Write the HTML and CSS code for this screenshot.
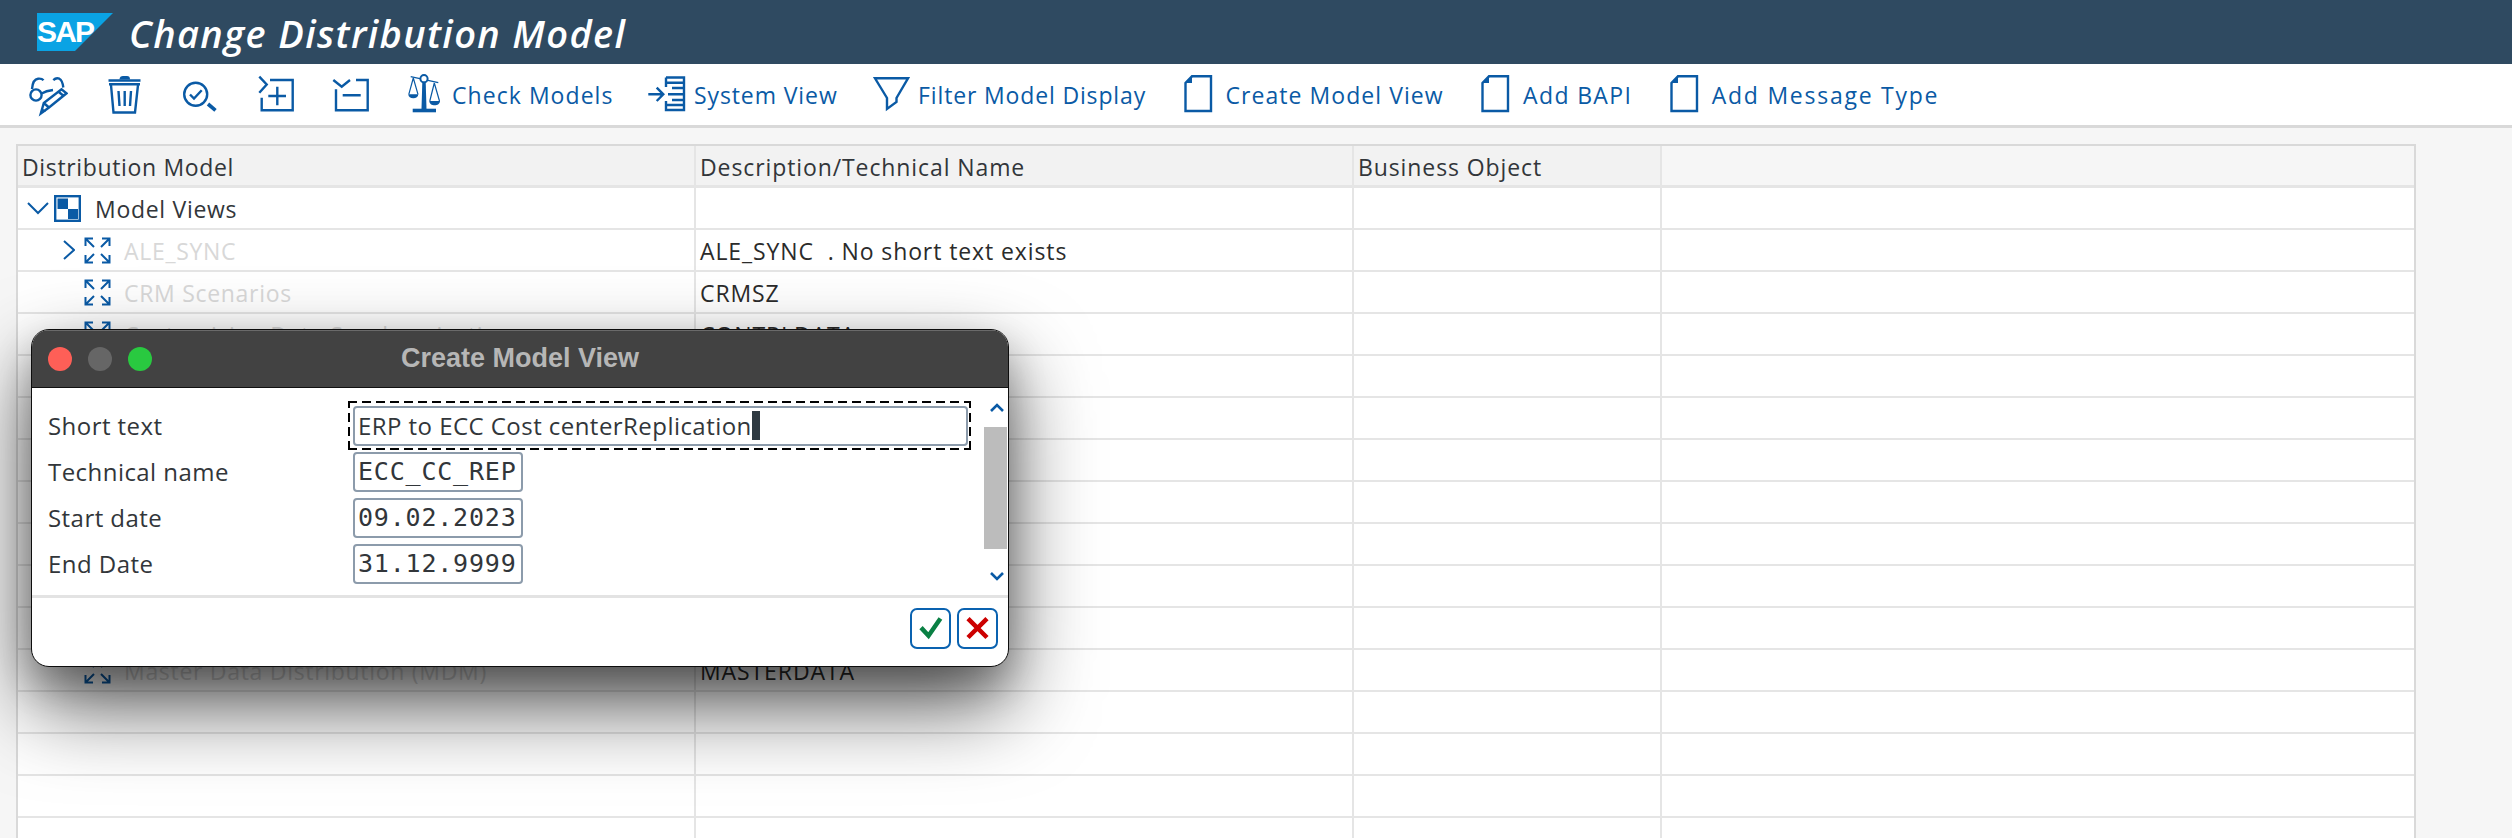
FILE: index.html
```html
<!DOCTYPE html>
<html lang="en">
<head>
<meta charset="utf-8">
<title>Change Distribution Model</title>
<link rel="stylesheet" href="styles.css">
</head>
<body>
<header class="titlebar">
  <div class="logo">
    <svg class="logo-shape" viewBox="0 0 76 38"><polygon points="0,0 76,0 38,38 0,38"/></svg>
    <span class="logo-text">SAP</span>
  </div>
  <h1 class="title">Change Distribution Model</h1>
</header>

<nav class="toolbar">
  <button class="tool">
    <svg class="ic w40" viewBox="0 0 40 44"><circle cx="8" cy="22" r="5.6"/><path d="M4 16C4.500 10 6.500 6 10 5.700C12.500 5.500 14.500 6 15.500 7.200M25.300 7.200C27 5.500 29.500 5 31.300 5.700C33.500 6.800 34.800 10 35.300 14.500M13.600 20.500C17 18.500 21 17.500 25 17"/><path d="M12.800 40.500L15.800 30L33.500 16.300L38.500 20.300L21 34.500ZM15.800 30L21 34.500M30.500 18.800L35.500 22.800"/><polygon class="fill" points="12.800,40.500 14.300,35.300 18,38.300"/></svg>
  </button>
  <button class="tool">
    <svg class="ic w40" viewBox="0 0 40 44"><path d="M4.500 7.500H36.500M5 11.300H36"/><path class="fill" d="M15.500 6.500C15.500 4 17 3 19 3H23C25 3 26 4 26 6.500Z"/><path d="M7 12L9.500 39.500H31L34 12"/><path d="M14.500 18L15.500 33M20.700 18V33M27 18L26 33"/></svg>
  </button>
  <button class="tool">
    <svg class="ic w40" viewBox="0 0 40 44"><circle cx="15.700" cy="21.300" r="11.500"/><path d="M10 21.500L14 25.500L21.700 17.300"/><path class="thick" d="M28 31L35.500 37.300"/></svg>
  </button>
  <button class="tool">
    <svg class="ic w40" viewBox="0 0 40 44"><path d="M3.300 3.700L10.700 11.500L3.300 19.700M14 7H36.700V37.300H5.700V24.700M12.300 23H30M21.300 13.700V32.300"/></svg>
  </button>
  <button class="tool">
    <svg class="ic w40" viewBox="0 0 40 44"><path d="M1.300 7L9.700 13.700L18 7M24 7H35.700V37.300H4V16.300M10.700 22.300H28.700"/></svg>
  </button>
  <button class="tool tool-text">
    <svg class="ic w36" viewBox="0 0 36 44"><path class="thin" d="M2.700 3.700L30.300 9.700"/><path class="thin" d="M5.300 5L0.800 21.300M5.300 5L10 21.300M26.300 10L21.800 28M26.300 10L31.500 28"/><path class="fill" d="M0.300 21.300H10.300C10.300 24 8 25.300 5.300 25.300C2.600 25.300 0.300 24 0.300 21.300ZM21.300 28H32C32 30.800 29.500 32.300 26.700 32.300C23.800 32.300 21.300 30.800 21.300 28Z"/><path class="fill" d="M14.300 9H17.700L18.500 36H13.500Z"/><circle class="white" cx="16" cy="5.700" r="3.600"/><path class="thick" d="M4.700 37.500H28"/></svg>
    <span>Check Models</span>
  </button>
  <button class="tool tool-text">
    <svg class="ic w38" viewBox="0 0 38 44"><path d="M0.300 21.300H15M8.700 14.700L15.300 21.300L8.700 28"/><path d="M18 4.500H36V37H18V28M18 4.500V14M18 9.700H36M24 15H36M20 21.300H36M24 27H36M18 32H36"/></svg>
    <span class="tight">System View</span>
  </button>
  <button class="tool tool-text">
    <svg class="ic w38" viewBox="0 0 38 44"><path d="M3 5.300H36L24.500 25V29L15 36V25Z"/></svg>
    <span class="tighter">Filter Model Display</span>
  </button>
  <button class="tool tool-text">
    <svg class="ic w37" viewBox="0 0 37 44"><path d="M11 3.300H30V38H4.500V10Z"/><path class="fill" d="M11 3.300V10H4.500Z"/></svg>
    <span>Create Model View</span>
  </button>
  <button class="tool tool-text">
    <svg class="ic w37" viewBox="0 0 37 44"><path d="M11 3.300H30V38H4.500V10Z"/><path class="fill" d="M11 3.300V10H4.500Z"/></svg>
    <span class="wide">Add BAPI</span>
  </button>
  <button class="tool tool-text">
    <svg class="ic w37" viewBox="0 0 37 44"><path d="M11 3.300H30V38H4.500V10Z"/><path class="fill" d="M11 3.300V10H4.500Z"/></svg>
    <span class="wider">Add Message Type</span>
  </button>
</nav>

<main class="content">
  <section class="table">
    <div class="row head">
      <div class="cell first">Distribution Model</div>
      <div class="cell">Description/Technical Name</div>
      <div class="cell">Business Object</div>
      <div class="cell last"></div>
    </div>
    <div class="row">
      <div class="cell tree lvl0">
        <svg class="chev" viewBox="0 0 22 14"><path d="M1 2L11 12L21 2"/></svg>
        <svg class="folder" viewBox="0 0 27 27"><rect x="1.200" y="1.200" width="24.600" height="24.600"/><rect class="blk" x="3.500" y="3.500" width="10.500" height="10.500"/><rect class="blk" x="14" y="14" width="10" height="10"/></svg>
        <span class="name">Model Views</span>
      </div>
      <div class="cell"></div><div class="cell"></div><div class="cell last"></div>
    </div>
    <div class="row">
      <div class="cell tree lvl1">
        <svg class="chev-r" viewBox="0 0 12 20"><path d="M1 1L11 10L1 19"/></svg>
        <svg class="expand" viewBox="0 0 27 27"><use href="#arrows"/></svg>
        <span class="name muted">ALE_SYNC</span>
      </div>
      <div class="cell desc">ALE_SYNC&nbsp; . No short text exists</div><div class="cell"></div><div class="cell last"></div>
    </div>
    <div class="row">
      <div class="cell tree lvl2">
        <svg class="expand" viewBox="0 0 27 27"><use href="#arrows"/></svg>
        <span class="name muted">CRM Scenarios</span>
      </div>
      <div class="cell desc">CRMSZ</div><div class="cell"></div><div class="cell last"></div>
    </div>
    <div class="row">
      <div class="cell tree lvl2">
        <svg class="expand" viewBox="0 0 27 27"><use href="#arrows"/></svg>
        <span class="name muted">Customizing Data Synchronization</span>
      </div>
      <div class="cell desc">CONTRLDATA</div><div class="cell"></div><div class="cell last"></div>
    </div>
    <div class="row"><div class="cell"></div><div class="cell"></div><div class="cell"></div><div class="cell last"></div></div>
    <div class="row"><div class="cell"></div><div class="cell"></div><div class="cell"></div><div class="cell last"></div></div>
    <div class="row"><div class="cell"></div><div class="cell"></div><div class="cell"></div><div class="cell last"></div></div>
    <div class="row"><div class="cell"></div><div class="cell"></div><div class="cell"></div><div class="cell last"></div></div>
    <div class="row"><div class="cell"></div><div class="cell"></div><div class="cell"></div><div class="cell last"></div></div>
    <div class="row"><div class="cell"></div><div class="cell"></div><div class="cell"></div><div class="cell last"></div></div>
    <div class="row"><div class="cell"></div><div class="cell"></div><div class="cell"></div><div class="cell last"></div></div>
    <div class="row">
      <div class="cell tree lvl2">
        <svg class="expand" viewBox="0 0 27 27"><use href="#arrows"/></svg>
        <span class="name muted">Master Data Distribution (MDM)</span>
      </div>
      <div class="cell desc">MASTERDATA</div><div class="cell"></div><div class="cell last"></div>
    </div>
    <div class="row"><div class="cell"></div><div class="cell"></div><div class="cell"></div><div class="cell last"></div></div>
    <div class="row"><div class="cell"></div><div class="cell"></div><div class="cell"></div><div class="cell last"></div></div>
    <div class="row"><div class="cell"></div><div class="cell"></div><div class="cell"></div><div class="cell last"></div></div>
    <div class="row"><div class="cell"></div><div class="cell"></div><div class="cell"></div><div class="cell last"></div></div>
  </section>
</main>

<section class="dialog">
  <div class="dlg-title">
    <div class="lights"><i class="light red"></i><i class="light grey"></i><i class="light green"></i></div>
    <span class="dlg-name">Create Model View</span>
  </div>
  <div class="dlg-body">
    <div class="form">
      <div class="field"><label>Short text</label><div class="input long focus">ERP to ECC Cost centerReplication<i class="caret"></i></div></div>
      <div class="field"><label>Technical name</label><div class="input mono">ECC_CC_REP</div></div>
      <div class="field"><label>Start date</label><div class="input mono">09.02.2023</div></div>
      <div class="field"><label>End Date</label><div class="input mono">31.12.9999</div></div>
    </div>
    <div class="scroll">
      <svg class="sc-arrow" viewBox="0 0 24 16"><path d="M6 11L12 5L18 11"/></svg>
      <div class="thumb"></div>
      <svg class="sc-arrow down" viewBox="0 0 24 16"><path d="M6 5L12 11L18 5"/></svg>
    </div>
  </div>
  <div class="dlg-foot">
    <button class="dbtn"><svg viewBox="0 0 41 41"><path class="ok" d="M10 19.500L18.300 28.500L31.500 9.500"/></svg></button>
    <button class="dbtn"><svg viewBox="0 0 41 41"><path class="no" d="M10 9.500L31 30.500M31 9.500L10 30.500"/></svg></button>
  </div>
</section>

<svg class="defs" width="0" height="0">
  <defs>
    <g id="arrows" class="arrows">
      <path d="M1.500 9V1.500H9M1.500 1.500L10 10M18 1.500H25.500V9M25.500 1.500L17 10M1.500 18V25.500H9M1.500 25.500L10 17M18 25.500H25.500V18M25.500 25.500L17 17"/>
    </g>
  </defs>
</svg>
</body>
</html>
```

FILE: styles.css
```css
* { box-sizing: border-box; }
html, body { margin: 0; height: 838px; overflow: hidden; }
body {
  width: 2512px;
  background: #f6f6f6;
  font-family: "Open Sans", "DejaVu Sans", sans-serif;
  font-size: 23px;
  color: #32363a;
  position: relative;
}

.titlebar {
  height: 64px;
  background: #2f4a61;
  display: flex;
  align-items: center;
  padding-left: 37px;
}
.logo { width: 76px; height: 38px; position: relative; }
.logo-shape { width: 76px; height: 38px; display: block; fill: #0aa3e4; }
.logo-text {
  position: absolute;
  left: 0;
  top: 1px;
  font: bold 30px/36px "Liberation Sans", sans-serif;
  letter-spacing: -1.8px;
  color: #fff;
}
.title {
  margin: 2px 0 0 16px;
  font: italic 600 38px/44px "Open Sans", sans-serif;
  letter-spacing: 1.35px;
  color: #fff;
}

.toolbar {
  height: 64px;
  background: #fff;
  border-bottom: 3px solid #d9d9d9;
  display: flex;
  align-items: center;
  gap: 36px;
  padding-left: 28px;
}
.tool {
  border: 0;
  background: none;
  padding: 0;
  margin: 0;
  display: flex;
  align-items: center;
  gap: 8px;
  font: inherit;
  letter-spacing: 1.05px;
  color: #0a5aa5;
}
.tool-text + .tool-text { margin-left: -1.5px; }
.tight { letter-spacing: .9px; }
.tighter { letter-spacing: .85px; }
.wide { letter-spacing: 1.35px; }
.wider { letter-spacing: 1.75px; }
.ic { height: 44px; display: block; fill: none; stroke: #0a5aa5; stroke-width: 2.4; }
.w40 { width: 40px; }
.w38 { width: 38px; }
.w37 { width: 37px; }
.w36 { width: 36px; }
.ic .fill { fill: #0a5aa5; stroke: none; }
.ic .thick { stroke-width: 3.6; }
.ic .thin { stroke-width: 1.2; }
.ic .white { fill: #fff; stroke-width: 2; }

.content { padding: 16px 96px 0 16px; }
.table {
  height: 700px;
  border: 2px solid #d9d9d9;
  border-bottom: 0;
  overflow: hidden;
  background: #fff;
}
.row {
  display: grid;
  grid-template-columns: 678px 658px 308px 1fr;
  height: 42px;
  border-bottom: 2px solid #e5e5e5;
}
.row.head {
  height: 42px;
  border-bottom-width: 3px;
  background: #f2f2f2;
}
.cell {
  border-right: 2px solid #e5e5e5;
  padding: 2px 0 0 4px;
  display: flex;
  align-items: center;
  white-space: pre;
  letter-spacing: .9px;
  overflow: hidden;
  color: #32363a;
}
.cell.first { letter-spacing: .65px; }
.cell.last { border-right: 0; }
.head .cell.last { background: #f6f6f6; }
.desc { padding-left: 4px; color: #2b2b2b; }
.tree { padding-top: 0; }
.lvl0 { padding-left: 9px; }
.lvl1 { padding-left: 45px; }
.lvl2 { padding-left: 66px; }
.chev { width: 22px; height: 14px; fill: none; stroke: #0a5aa5; stroke-width: 2; margin-right: 5px; }
.chev-r { width: 12px; height: 20px; fill: none; stroke: #0a5aa5; stroke-width: 2; margin-right: 9px; }
.folder { width: 27px; height: 27px; margin-right: 14px; fill: none; stroke: #0a5aa5; stroke-width: 2.4; }
.folder .blk { fill: #0a5aa5; stroke: none; }
.expand { width: 27px; height: 27px; margin-right: 13px; fill: none; stroke: #0a5aa5; stroke-width: 2; }
.name { letter-spacing: .7px; padding-top: 2px; line-height: 22px; }
.muted { color: #d8d8d8; }
.defs { position: absolute; }

.dialog {
  position: absolute;
  left: 31px;
  top: 329px;
  width: 978px;
  height: 338px;
  background: #fff;
  border: 1px solid #0d0d0d;
  border-radius: 18px;
  box-shadow: 0 38px 84px rgba(0, 0, 0, .66), 0 18px 36px rgba(0, 0, 0, .22);
  overflow: hidden;
  display: flex;
  flex-direction: column;
}
.dlg-title {
  height: 58px;
  flex: none;
  background: #424242;
  border-bottom: 1px solid #111;
  box-shadow: inset 0 1px 0 #6a6a6a;
  position: relative;
  display: flex;
  align-items: center;
  justify-content: center;
}
.lights { position: absolute; left: 16px; top: 17px; display: flex; gap: 16px; }
.light { width: 24px; height: 24px; border-radius: 50%; display: block; }
.red { background: #fe5f57; }
.grey { background: #666; }
.green { background: #29c940; }
.dlg-name {
  font: bold 27px/22px "Liberation Sans", sans-serif;
  color: #b6b6b6;
  margin-bottom: 2px;
}
.dlg-body { display: flex; height: 207px; flex: none; font-size: 24px; }
.form {
  width: 952px;
  padding: 18px 0 0 16px;
  display: flex;
  flex-direction: column;
  gap: 6px;
}
.field { display: flex; align-items: center; height: 40px; }
.field label { width: 305px; letter-spacing: .45px; padding-bottom: 2px; }
.input {
  height: 40px;
  width: 170px;
  border: 2px solid #8c9bab;
  border-radius: 4px;
  display: flex;
  align-items: center;
  padding: 0 0 2px 3px;
  white-space: pre;
  letter-spacing: .45px;
  background: #fff;
}
.long { width: 615px; }
.focus { position: relative; }
.focus::after {
  content: "";
  position: absolute;
  inset: -7px -5px -6px -7px;
  background:
    repeating-linear-gradient(90deg, #000 0 9px, transparent 9px 14px) left top / 100% 2px no-repeat,
    repeating-linear-gradient(90deg, #000 0 9px, transparent 9px 14px) left bottom / 100% 2px no-repeat,
    repeating-linear-gradient(0deg, #000 0 9px, transparent 9px 14px) left top / 2px 100% no-repeat,
    repeating-linear-gradient(0deg, #000 0 9px, transparent 9px 14px) right top / 2px 100% no-repeat;
}
.mono { font-family: "DejaVu Sans Mono", monospace; font-size: 25px; letter-spacing: .8px; }
.caret { width: 8px; height: 29px; background: #2f3a42; display: block; }
.scroll { width: 23px; flex: none; display: flex; flex-direction: column; padding-top: 12px; }
.sc-arrow { width: 24px; height: 16px; flex: none; fill: none; stroke: #0a5aa5; stroke-width: 2.6; display: block; margin-left: 1px; }
.thumb { height: 122px; flex: none; margin-top: 11px; background: #bcbcbc; }
.sc-arrow.down { margin-top: 19px; }
.dlg-foot {
  flex: 1;
  border-top: 3px solid #e3e3e3;
  display: flex;
  justify-content: flex-end;
  gap: 6px;
  padding: 10px 10px 0 0;
}
.dbtn {
  width: 41px;
  height: 41px;
  padding: 0;
  background: #fff;
  border: 2px solid #0a62b0;
  border-radius: 7px;
}
.dbtn svg { display: block; width: 37px; height: 37px; fill: none; stroke-width: 5; }
.ok { stroke: #0a8044; }
.no { stroke: #cc0000; }
```
